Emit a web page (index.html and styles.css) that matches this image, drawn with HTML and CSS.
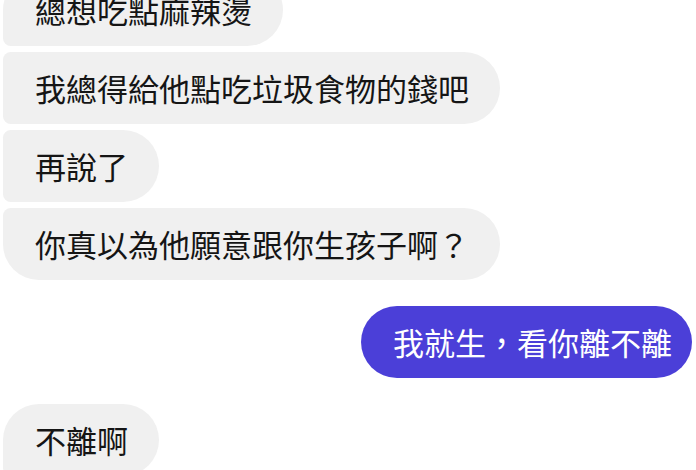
FILE: index.html
```html
<!DOCTYPE html>
<html lang="zh-Hant">
  <head>
    <meta charset="utf-8" />
    <meta name="viewport" content="width=device-width, initial-scale=1" />
    <title>Chat</title>
    <link rel="stylesheet" href="styles.css">
  </head>
  <body>
    <div class="chat">
      <!--Them-->
      <div class="group group-them">
        <div class="bubble bubble-first">總想吃點麻辣燙</div>
        <div class="bubble bubble-mid">我總得給他點吃垃圾食物的錢吧</div>
        <div class="bubble bubble-mid">再說了</div>
        <div class="bubble bubble-last">你真以為他願意跟你生孩子啊？</div>
      </div>
      <!--Me-->
      <div class="group group-me">
        <div class="bubble bubble-me">我就生，看你離不離</div>
      </div>
      <!--Them-->
      <div class="group group-them">
        <div class="bubble bubble-first">不離啊</div>
      </div>
    </div>
  </body>
</html>
```

FILE: styles.css
```css
body {
  margin: 0;
  background-color: #ffffff;
  font-family: "Noto Sans CJK TC", "Noto Sans", sans-serif;
  overflow: hidden;
}
.chat {
  display: flex;
  flex-direction: column;
  gap: 26px;
  margin-top: -26px;
  padding: 0 4px 0 3px;
}
.group {
  display: flex;
  flex-direction: column;
  gap: 6px;
}
.group-them {
  align-items: flex-start;
}
.group-me {
  align-items: flex-end;
}
.bubble {
  font-size: 31px;
  line-height: 40px;
  height: 40px;
  padding: 16px 31px 16px 32px;
  border-radius: 37px;
  color: #151515;
  background-color: #f0f0f0;
  white-space: nowrap;
}
.bubble-first {
  border-bottom-left-radius: 8px;
}
.bubble-mid {
  border-top-left-radius: 8px;
  border-bottom-left-radius: 8px;
}
.bubble-last {
  border-top-left-radius: 8px;
}
.bubble-me {
  color: #ffffff;
  background-color: #4b3fd8;
  padding-right: 20px;
}
```
